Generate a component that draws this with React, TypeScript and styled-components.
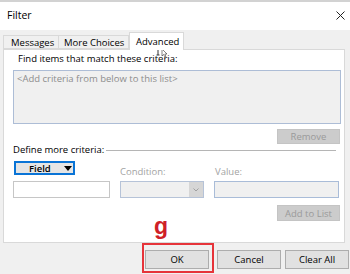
import styled, { createGlobalStyle } from "styled-components";

const GlobalStyle = createGlobalStyle`
  html, body {
    margin: 0;
    padding: 0;
    background: #f0f0f0;
  }
  * {
    box-sizing: border-box;
  }
`

const Dialog = styled.div`
  position: relative;
  width: 350px;
  height: 274px;
  display: flex;
  flex-direction: column;
  background: #f0f0f0;
  font-family: "Open Sans", "Noto Sans", sans-serif;
  font-size: 9.5px;
  color: #000;
  overflow: hidden;
  border-top: 2px solid #d2d2d2;
`

const TitleBar = styled.div`
  height: 28px;
  display: flex;
  align-items: center;
  justify-content: space-between;
  padding: 0 5px 3px 7px;
  background: #fff;
`

const Title = styled.span`
  font-size: 10.5px;
`

const CloseIcon = styled.svg`
  width: 9px;
  height: 9px;
  margin-top: 2px;
`

const Body = styled.div`
  flex: 1;
  display: flex;
  flex-direction: column;
  padding: 0 5px 0 3px;
`

const TabStrip = styled.div`
  height: 19px;
  display: flex;
  align-items: flex-end;
`

const Tab = styled.div<{ $active?: boolean; $first?: boolean; $width: number; $pad: number }>`
  height: ${p => (p.$active ? "18px" : "14px")};
  width: ${p => p.$width}px;
  display: flex;
  align-items: ${p => (p.$active ? "flex-start" : "center")};
  padding-top: ${p => (p.$active ? "2px" : "0")};
  padding-left: ${p => p.$pad}px;
  background: ${p => (p.$active ? "#fff" : "#f0f0f0")};
  border: 1px solid #d9d9d9;
  border-bottom: ${p => (p.$active ? "none" : "1px solid #d9d9d9")};
  border-left: ${p => (p.$first || p.$active ? "1px solid #d9d9d9" : "none")};
  margin-bottom: ${p => (p.$active ? "-1px" : "0")};
  position: relative;
  z-index: ${p => (p.$active ? 1 : 0)};
`

const Panel = styled.div`
  height: 194px;
  background: #fff;
  border: 1px solid #d9d9d9;
  padding: 3px 3px 0 9px;
  display: flex;
  flex-direction: column;
`

const Label = styled.div<{ $muted?: boolean }>`
  line-height: 12px;
  color: ${p => (p.$muted ? "#a3a3a3" : "#000")};
`

const FindLabel = styled(Label)`
  padding-left: 5px;
  margin-bottom: 5px;
`

const CriteriaList = styled.div`
  height: 54px;
  background: #f0f0f0;
  border: 1px solid #adbdd6;
  padding: 2px 3px;
  color: #8d8d8d;
  line-height: 12px;
`

const Button = styled.div<{ $disabled?: boolean; $h?: number }>`
  width: 63px;
  height: ${p => p.$h || 19}px;
  display: flex;
  align-items: center;
  justify-content: center;
  background: ${p => (p.$disabled ? "#cccccc" : "#e1e1e1")};
  border: 1px solid ${p => (p.$disabled ? "#c4c4c4" : "#adadad")};
  color: ${p => (p.$disabled ? "#9a9a9a" : "#000")};
`

const RightRow = styled.div<{ $top: number }>`
  display: flex;
  justify-content: flex-end;
  padding-right: 1px;
  margin-top: ${p => p.$top}px;
`

const SectionHead = styled.div`
  display: flex;
  align-items: center;
  gap: 2px;
  padding-right: 5px;
`

const Rule = styled.div`
  flex: 1;
  height: 1px;
  background: #b5b5b5;
`

const CriteriaGrid = styled.div`
  display: grid;
  grid-template-columns: 97px 84px 125px;
  grid-template-rows: 16px 17px;
  column-gap: 10px;
  row-gap: 4px;
  margin-top: 5px;
  & > :nth-child(3) {
    margin-left: 1px;
  }
`

const FieldButton = styled.div`
  width: 61px;
  height: 14px;
  margin-left: 1px;
  display: flex;
  align-items: center;
  justify-content: space-between;
  padding: 0 1px 0 13px;
  background: #e5e5e5;
  border: 2px solid #0a74d6;
  font-weight: 600;
`

const Caret = styled.svg`
  width: 8px;
  height: 5px;
`

const GridLabel = styled(Label)`
  align-self: end;
  margin-bottom: -1px;
`

const TextBox = styled.div<{ $disabled?: boolean }>`
  height: 17px;
  background: ${p => (p.$disabled ? "#f0f0f0" : "#fff")};
  border: 1px solid ${p => (p.$disabled ? "#a9bcd8" : "#c6c6c6")};
`

const Combo = styled.div`
  height: 17px;
  display: flex;
  justify-content: flex-end;
  background: #f0f0f0;
  border: 1px solid #b6c3d8;
`

const ComboArrow = styled.div`
  width: 14px;
  display: flex;
  align-items: center;
  justify-content: center;
  background: #d6d6d6;
`

const Footer = styled.div`
  flex: 1;
  display: flex;
  justify-content: flex-end;
  align-items: flex-start;
  gap: 4px;
  margin-right: -4px;
`

const Highlight = styled.div`
  padding: 5px 3px 2px 1px;
  border: 2px solid #e6343a;
  margin-right: -1px;
`

const FooterButton = styled(Button)`
  width: 64px;
  margin-top: 7px;
`

const OkButton = styled(Button)`
  width: 64px;
`

const Annotation = styled.div`
  position: absolute;
  left: 154px;
  top: 213px;
  font-family: "Liberation Sans", Arial, sans-serif;
  font-weight: 700;
  font-size: 23px;
  line-height: 23px;
  color: #cf2027;
`

const Cursor = styled.svg`
  position: absolute;
  left: 156px;
  top: 41px;
  width: 12px;
  height: 14px;
`

export default function App() {
  return (
    <>
      <GlobalStyle />
      <Dialog>
        <TitleBar>
          <Title>Filter</Title>
          <CloseIcon viewBox="0 0 9 9">
            <path d="M0.5 0.5 L8.5 8.5 M8.5 0.5 L0.5 8.5" stroke="#222" strokeWidth="1" fill="none" />
          </CloseIcon>
        </TitleBar>
        <Body>
          <TabStrip>
            <Tab $first $width={56} $pad={7}>Messages</Tab>
            <Tab $width={70} $pad={5}>More Choices</Tab>
            <Tab $active $width={55} $pad={6}>Advanced</Tab>
          </TabStrip>
          <Panel>
            <FindLabel>Find items that match these criteria:</FindLabel>
            <CriteriaList>&lt;Add criteria from below to this list&gt;</CriteriaList>
            <RightRow $top={5}>
              <Button $disabled $h={15}>Remove</Button>
            </RightRow>
            <SectionHead>
              <Label>Define more criteria:</Label>
              <Rule />
            </SectionHead>
            <CriteriaGrid>
              <FieldButton>
                <span>Field</span>
                <Caret viewBox="0 0 8 5">
                  <path d="M0 0 L8 0 L4 5 Z" fill="#000" />
                </Caret>
              </FieldButton>
              <GridLabel $muted>Condition:</GridLabel>
              <GridLabel $muted>Value:</GridLabel>
              <TextBox />
              <Combo>
                <ComboArrow>
                  <svg width="6" height="4" viewBox="0 0 6 4">
                    <path d="M0.5 0.5 L3 3 L5.5 0.5" stroke="#a0a0a0" fill="none" />
                  </svg>
                </ComboArrow>
              </Combo>
              <TextBox $disabled />
            </CriteriaGrid>
            <RightRow $top={7}>
              <Button $disabled $h={16}>Add to List</Button>
            </RightRow>
          </Panel>
          <Footer>
            <Highlight>
              <OkButton>OK</OkButton>
            </Highlight>
            <FooterButton>Cancel</FooterButton>
            <FooterButton>Clear All</FooterButton>
          </Footer>
        </Body>
        <Annotation>g</Annotation>
        <Cursor viewBox="0 0 12 14">
          <path d="M2 1 L2 12 M0.5 1 L3.5 1 M0.5 12 L3.5 12" stroke="#333" strokeWidth="1" fill="none" />
          <path d="M6 6 L6 13 L7.5 11.5 L9 14 L10 13.5 L8.8 11 L11 11 Z" fill="#fff" stroke="#333" strokeWidth="0.6" />
        </Cursor>
      </Dialog>
    </>
  );
}
